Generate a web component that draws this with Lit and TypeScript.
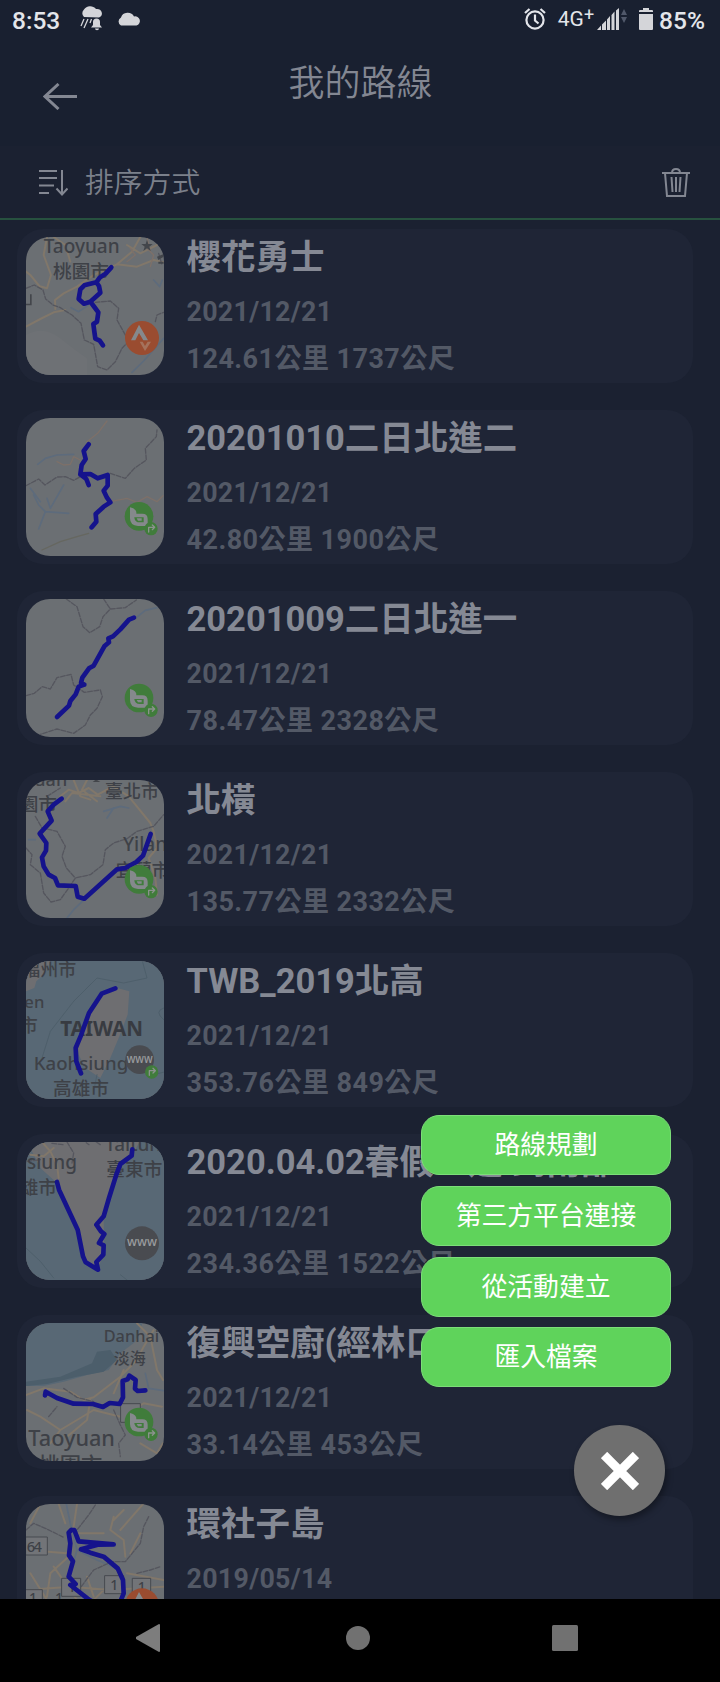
import { LitElement, html, svg, css, nothing } from 'lit';
import { customElement, property, state } from 'lit/decorators.js';

type Badge = 'strava' | 'www' | 'bryton-nav' | 'www-nav';

interface Route {
  name: string;
  date: string;
  info: string;
  badge: Badge;
  badgeX: number;
  badgeY: number;
  top: number;
  track: string;
  map: unknown;
}

// each map is drawn on a 414 unit canvas that starts at x = 47, y = top
const routes: Route[] = [
  {
    name: '櫻花勇士',
    date: '2021/12/21',
    info: '124.61公里 1737公尺',
    badge: 'strava',
    badgeX: 395,
    badgeY: 339,
    top: 36,
    track: 'M303 127 L286 146 L268 158 L258 172 L222 181 L210 193 L205 222 L221 236 L240 230 L270 203 L266 183 L258 172 M240 230 L252 246 L264 262 L260 290 L249 297 L252 320 L255 341 L268 347 L278 361',
    map: svg`
      <path class="land2" d="M47 330 Q100 300 150 340 T230 400 V450 H47Z" />
      <path class="road" d="M110 36 L100 90 L122 150 L110 190 L88 184 L60 150 L47 140 M47 305 L90 282 L130 262 L165 255 M135 252 L134 225 L160 205 L200 185 L250 150 L320 118 L380 125 L430 105 L460 112 M350 60 L390 85 L440 60 M320 118 L365 80 L390 36 M130 36 L165 60 L180 110" />
      <path class="road2" d="M360 70 L375 90 L350 110 M400 60 L430 90 L420 125 M410 36 L420 80" />
      <path class="line" d="M47 190 L72 180 L98 195 L106 222 L128 240 L150 248 L185 270 L212 295 L222 345 L250 358 L262 425 L290 435 L315 410 L335 370 L352 352 M255 232 L300 228 L325 250 L320 285 L345 330 L352 352 M435 290 L440 270 L460 262 M445 85 L455 120" />
      <path class="river" d="M182 248 L205 260 L235 240 M430 165 L448 185 L456 165 M460 340 L400 408 L365 442" />
      <path class="mark" d="M410 44 l4 13 h13 l-10 8 4 13 -11 -8 -11 8 4 -13 -10 -8 h13z M47 236 h12 v-28 h5 v33 h-17z M440 95 l20 -8 v8 l-16 10z M444 110 h16 v6 h-16z" />
      <text x="214" y="84" font-size="57" text-anchor="middle">Taoyuan</text>
      <text x="212" y="160" font-size="56" text-anchor="middle">桃園市</text>`,
  },
  {
    name: '20201010二日北進二',
    date: '2021/12/21',
    info: '42.80公里 1900公尺',
    badge: 'bryton-nav',
    badgeX: 386,
    badgeY: 334,
    top: 39,
    track: 'M235 118 L220 138 L226 162 L214 180 L210 208 L228 222 L235 240 M210 208 L240 207 L262 220 L292 210 L292 242 L280 257 L290 278 L300 292 L280 305 L256 327 L258 350 L244 367',
    map: svg`
      <path class="river" d="M82 178 L105 160 L140 150 L190 148 M70 270 L85 300 L105 320 L175 325 M105 320 L85 372 M110 280 L120 310 L160 240 M60 250 L90 290" />
      <path class="road2" d="M230 110 L262 85 L290 48 M140 170 L160 180 L180 178 L190 155 L210 165 M300 290 L350 280 L380 292 L410 275 L440 290 L458 272" />
      <path class="line" d="M47 242 L85 222 L104 240 L140 216 L165 215 L190 226 L210 215 M300 205 L345 220 L372 190 L408 165 L405 130 L438 95 L440 75" />
      <path class="road3" d="M95 435 L150 410 L200 395 L235 385" />`,
  },
  {
    name: '20201009二日北進一',
    date: '2021/12/21',
    info: '78.47公里 2328公尺',
    badge: 'bryton-nav',
    badgeX: 386,
    badgeY: 339,
    top: 42,
    track: 'M371 98 L356 104 L330 133 L308 154 L294 160 L296 172 L282 184 L250 242 L236 250 L216 278 L212 294 L222 299 L205 305 L196 328 L180 348 L176 362 L140 396',
    map: svg`
      <path class="river" d="M380 96 L405 76 L440 68" stroke-width="12" />
      <path class="line" d="M168 42 L200 65 L218 125 L238 143 L268 125 L278 95 L300 72 L345 68 L378 45 M280 42 L300 72 M47 332 L72 325 L95 305 L120 312 L140 278 L182 268 L190 300 L222 322 L270 315 L276 335 L260 370 L240 390 L225 420 L190 445 L140 432 L90 448" />`,
  },
  {
    name: '北橫',
    date: '2021/12/21',
    info: '135.77公里 2332公尺',
    badge: 'bryton-nav',
    badgeX: 386,
    badgeY: 334,
    top: 36,
    track: 'M154 92 L130 110 L112 130 L124 158 L88 197 L108 225 L107 248 L95 268 L100 295 L115 320 L134 330 L143 352 L196 354 L202 386 L222 392 L320 304 L345 300 L378 282 L398 263 L421 198',
    map: svg`
      <path class="road" d="M150 85 L175 65 L205 75 L235 60 L262 80 L300 60 M190 36 L210 85 L240 95 M230 36 L215 65 L260 100 M300 50 L355 85 L420 165 L430 190 L440 240 L415 270 L435 330 L440 380 M165 100 L185 75 L270 85" />
      <path class="river" d="M280 130 L330 115 L355 120 M290 150 L310 120 M225 392 L190 425 L170 450 M270 350 L300 320 M55 215 L75 215" />
      <path class="line" d="M47 240 L65 260 L60 290 L90 315 L100 375 L122 402 L150 395 L175 360 L195 330 L240 320 L278 290 L285 245 L310 225 L350 212 L380 190 L430 175 L460 140 M75 145 L95 180 L140 190 L165 235 L155 265 L168 300 L195 330 M110 85 L150 60" />
      <text x="72" y="54" font-size="54">uan</text>
      <path class="mark" d="M247 42 l10 -8 13 8z" />
      <text x="284" y="90" font-size="54">臺北市</text>
      <text x="28" y="128" font-size="56">園市</text>
      <text x="338" y="249" font-size="57">Yilan</text>
      <text x="316" y="326" font-size="54">宜蘭市</text>`,
  },
  {
    name: 'TWB_2019北高',
    date: '2021/12/21',
    info: '353.76公里 849公尺',
    badge: 'www-nav',
    badgeX: 388,
    badgeY: 335,
    top: 39,
    track: 'M315 121 L274 137 L236 195 L212 262 L196 300 L198 340 L212 376',
    map: svg`
      <path class="water" d="M40 30 H470 V460 H40Z" />
      <path class="land" d="M40 30 H125 L105 75 L78 100 L72 120 L47 130Z M276 135 L312 118 L357 130 L352 200 L325 270 L300 330 L270 390 L225 360 L205 320 L200 290 L240 190Z" />
      <path class="depth" d="M396 39 L410 90 L340 105 L260 90 L190 160 M190 160 L120 250 L95 330 M460 180 Q430 190 460 215 M470 370 L430 380 L370 300 M250 430 L260 380" />
      <text x="36" y="84" font-size="54">福州市</text>
      <text x="42" y="180" font-size="50">en</text>
      <text x="28" y="252" font-size="54">市</text>
      <text class="bold" x="274" y="263" font-size="62" text-anchor="middle">TAIWAN</text>
      <text x="212" y="367" font-size="56" text-anchor="middle">Kaohsiung</text>
      <text x="212" y="441" font-size="56" text-anchor="middle">高雄市</text>`,
  },
  {
    name: '2020.04.02春假一遊 到南部',
    date: '2021/12/21',
    info: '234.36公里 1522公尺',
    badge: 'www',
    badgeX: 395,
    badgeY: 346,
    top: 42,
    track: 'M366 64 L364 83 L330 108 L318 140 L296 210 L280 265 L258 290 L272 310 L282 318 L266 345 L280 352 L279 380 L258 402 L263 425 L226 403 L218 385 L202 305 L146 185 L140 162',
    map: svg`
      <path class="water" d="M40 30 H470 V470 H40Z" />
      <path class="land" d="M47 36 H390 L365 85 L330 108 L280 265 L282 375 L262 422 L225 400 L202 305 L140 165 L90 120 L60 60Z" />
      <path class="road" d="M95 42 L120 70 L140 110 L145 150 M60 80 L100 85 L130 60" />
      <path class="line" d="M170 42 L190 75 L185 105 M50 100 L90 95 M125 46 L160 50 M228 44 L236 50 M258 42 L270 50" />
      <path class="depth" d="M47 360 L90 400 L130 450 M330 440 L350 456" />
      <text x="50" y="124" font-size="57">siung</text>
      <text x="28" y="198" font-size="56">雄市</text>
      <text x="284" y="70" font-size="57">Taitung</text>
      <text x="288" y="144" font-size="56">臺東市</text>`,
  },
  {
    name: '復興空廚(經林口',
    date: '2021/12/21',
    info: '33.14公里 453公尺',
    badge: 'bryton-nav',
    badgeX: 386,
    badgeY: 336,
    top: 39,
    track: 'M104 256 L106 245 L140 264 L190 281 L248 282 L278 291 L298 279 L328 282 L338 262 L337 213 L352 208 L357 197 L376 210 L374 236 L382 243 L405 241',
    map: svg`
      <path class="water" d="M40 30 H400 L375 95 L330 130 L295 180 L230 195 L160 215 L100 228 L47 228Z" />
      <path class="depth2" d="M245 160 L260 125 L300 120 L320 150 L280 185 L200 200 L110 222 L47 228 V215 L150 200Z" />
      <path class="river" d="M405 190 L415 235 L460 242" stroke-width="10" />
      <path class="road" d="M47 255 L100 235 L180 245 L220 270 L250 262 L330 200 L380 150 L400 110 L430 60 M50 300 L90 320 L150 360 L250 300 L330 320 L400 280 L455 290 M150 360 L120 400 M380 40 L420 80 L440 180 L458 210 M240 270 L230 330 L170 380 M340 180 L310 250 M390 400 L440 430 L458 400" />
      <path class="line" d="M160 235 L200 262 L250 275 M310 300 L330 345 L345 375 L325 400 L330 440 M115 320 L140 290" />
      <path class="box" d="M332 281 h58 v56 h-58z" />
      <text x="280" y="96" font-size="49">Danhai</text>
      <text x="310" y="162" font-size="48">淡海</text>
      <text x="54" y="408" font-size="65">Taoyuan</text>
      <text x="84" y="488" font-size="64">桃園市</text>`,
  },
  {
    name: '環社子島',
    date: '2019/05/14',
    info: '',
    badge: 'strava',
    badgeX: 395,
    badgeY: 346,
    top: 42,
    track: 'M183 120 L175 128 L180 160 L176 196 L188 214 L175 260 L196 282 M180 285 L232 326 L270 350 L330 335 L340 310 L338 270 L322 235 L280 200 L240 188 L212 178 L262 164 L310 163 L205 154 L192 120 L183 120',
    map: svg`
      <path class="river" d="M168 42 L182 110 L200 180 L260 210 L320 235 M200 180 L180 250" stroke-width="12" />
      <path class="road" d="M145 42 L165 100 M200 42 L190 110 M195 130 L280 130 M180 195 L120 250 L110 320 M47 180 L170 190 M310 80 L300 120 L340 150 L345 200 M390 130 L360 190 M47 300 L180 290 L300 300 L460 290 M230 260 L250 320 M60 250 L110 330 M340 60 L310 90 M350 250 L460 270 M130 230 L200 330 M90 42 L60 100 M330 120 L400 40 M250 330 L300 280" />
      <path class="line" d="M47 120 L70 100 L105 115 L160 142 M255 45 L235 75 L200 120 M415 80 L400 110 L390 160 L345 215 L305 215 L250 240 L205 300 M380 250 L420 240 L450 230" />
      <path class="box" d="M47 141 h64 v54 h-64z M155 265 h56 v54 h-56z M284 257 h56 v54 h-56z M367 265 h54 v54 h-54z M40 299 h56 v54 h-56z" />
      <text x="49" y="185" font-size="44" textLength="46">64</text>
      <text x="172" y="307" font-size="42">1</text>
      <text x="300" y="300" font-size="42">1</text>
      <text x="382" y="307" font-size="42">1</text>
      <text x="56" y="340" font-size="42">1</text>
      <text x="134" y="340" font-size="42">1</text>`,
  },
];

@customElement('route-map')
class RouteMap extends LitElement {
  @property({ attribute: false }) route!: Route;

  static styles = css`
    :host {
      display: block;
      width: 138px;
      height: 138px;
      border-radius: 24px;
      overflow: hidden;
      background: #6b6f73;
    }

    svg {
      display: block;
      width: 138px;
      height: 138px;
    }

    path {
      fill: none;
      stroke-linejoin: round;
      stroke-linecap: round;
    }

    text {
      font-family: 'Noto Sans', 'Noto Sans CJK TC', sans-serif;
      font-weight: 500;
      fill: #3e4147;
    }

    .bold {
      font-weight: bold;
      fill: #383b41;
    }

    .water {
      fill: #586875;
    }

    .land {
      fill: #6e6e71;
    }

    .land2 {
      fill: #6e7175;
    }

    .depth {
      stroke: #4e5f6b;
      stroke-width: 3;
    }

    .depth2 {
      fill: #4c5e6b;
    }

    .road {
      stroke: #81776a;
      stroke-width: 6;
    }

    .road2 {
      stroke: #7d7069;
      stroke-width: 4;
    }

    .road3 {
      stroke: #666760;
      stroke-width: 4;
    }

    .line {
      stroke: #55565e;
      stroke-width: 4;
      stroke-dasharray: 14 5;
    }

    .river {
      stroke: #5d6b7c;
      stroke-width: 5;
    }

    .mark {
      fill: #43464b;
    }

    .box {
      fill: #727478;
      stroke: #474a50;
      stroke-width: 3;
    }

    .track {
      stroke: #15138c;
      stroke-width: 14;
    }

    .strava {
      fill: #9a4c30;
    }

    .green {
      fill: #407c3b;
    }

    .gray {
      fill: #494b50;
    }

    .logo {
      fill: #85898c;
    }

    .logo-soft {
      fill: #a5725c;
    }

    .arrow {
      stroke: #8b928d;
      stroke-width: 4;
    }

    .www {
      fill: #999b9e;
      font-size: 38px;
      text-anchor: middle;
    }
  `;

  renderBadge() {
    const { badge, badgeX, badgeY } = this.route;
    const nav = badge.endsWith('-nav');
    return svg`
      <g transform="translate(${badgeX} ${badgeY})">
        ${badge === 'strava'
          ? svg`
            <circle class="strava" r="51" />
            <path class="logo" d="M-9 -40 L18 7 H4 L-9 -15 L-20 7 H-33Z" />
            <path class="logo-soft" d="M-7 11 H2 L9 24 L17 11 H27 L9 39Z" />`
          : nothing}
        ${badge.startsWith('bryton')
          ? svg`
            <circle class="green" r="43" />
            <path class="logo" fill-rule="evenodd" d="M-27 -27 Q-6 -22 -8 -8 H10 Q26 -8 26 8 V29 H-3 Q-27 28 -27 6Z M-14 4 Q-12 18 2 18 H14 V3 H-14Z" />
            <path class="logo" d="M-7 6 h15 v7 h-11z" />`
          : nothing}
        ${badge.startsWith('www')
          ? svg`
            <circle class="gray" r="${nav ? 43 : 51}" />
            <text class="www" y="9" textLength="${nav ? 78 : 90}" lengthAdjust="spacingAndGlyphs">www</text>`
          : nothing}
        ${nav
          ? svg`
            <circle class="green" cx="36" cy="37" r="20" />
            <path class="arrow" d="M29 47 V33 H46 M40 26 L47 33 L40 40" />`
          : nothing}
      </g>`;
  }

  render() {
    return html`
      <svg viewBox="47 ${this.route.top} 414 414">
        ${this.route.map}
        <path class="track" d=${this.route.track} />
        ${this.renderBadge()}
      </svg>
    `;
  }
}

@customElement('route-card')
class RouteCard extends LitElement {
  @property({ attribute: false }) route!: Route;

  static styles = css`
    :host {
      display: flex;
      gap: 22.5px;
      flex: none;
      box-sizing: border-box;
      height: 154px;
      padding: 8px 9px;
      border-radius: 26px;
      background: #1f2536;
    }

    .text {
      margin-top: -8px;
      font-weight: bold;
      white-space: nowrap;
      color: #535966;
    }

    .name {
      font-size: 34.5px;
      line-height: 56px;
      color: #858994;
    }

    .date {
      font-size: 26.8px;
      line-height: 54px;
      letter-spacing: 0.3px;
    }

    .info {
      font-size: 27px;
      line-height: 41px;
      letter-spacing: 0.45px;
    }
  `;

  render() {
    return html`
      <route-map .route=${this.route}></route-map>
      <div class="text">
        <div class="name">${this.route.name}</div>
        <div class="date">${this.route.date}</div>
        <div class="info">${this.route.info}</div>
      </div>
    `;
  }
}

@customElement('status-bar')
class StatusBar extends LitElement {
  static styles = css`
    :host {
      display: flex;
      align-items: center;
      box-sizing: border-box;
      height: 40px;
      padding: 0 15px 2px 12px;
      color: #e3e5ea;
      font-size: 24.5px;
      line-height: 38px;
      font-weight: 500;
    }

    svg {
      display: block;
      fill: #d4d5d9;
      overflow: visible;
    }

    span {
      margin-top: 3px;
    }

    .rain {
      margin-left: 19px;
    }

    .cloud {
      margin-left: 13px;
    }

    .alarm {
      margin-left: auto;
    }

    .net {
      margin: 0 0 0 12px;
      font-size: 21px;
      font-weight: 400;
    }

    .net sup {
      font-size: 18px;
      line-height: 0;
      vertical-align: 5px;
    }

    .signal {
      margin-left: 3px;
    }

    .battery {
      margin-left: 11px;
      margin-right: 6px;
    }
  `;

  render() {
    return html`
      <span>8:53</span>
      <svg class="rain" width="25" height="26" viewBox="0 0 25 26">
        <path d="M5 11 A5 5 0 0 1 5 3.5 A7 6 0 0 1 17 3 A5 4.500 0 0 1 20 11.500Z" />
        <path d="M5 13 L2 20 M9 13 L5 22 M12.500 13 L11 17" stroke="#d4d5d9" stroke-width="1.300" />
        <path d="M12 21.500 L14 19 V16 A3.500 3.500 0 0 1 21 16 V19 L23 21.500Z M16 22.500 h4 a2 1.700 0 0 1 -4 0z" />
      </svg>
      <svg class="cloud" width="24" height="14" viewBox="0 0 24 14">
        <path d="M4 13.500 A4.500 4.500 0 0 1 4 5.500 A7 6.500 0 0 1 17 4.500 A4.500 4.500 0 0 1 19.500 13.500Z" />
      </svg>
      <svg class="alarm" width="22" height="22" viewBox="0 0 22 22">
        <g fill="none" stroke="#e3e5ea" stroke-width="2.200">
          <circle cx="11" cy="12" r="8.600" />
          <path d="M11 6.500 V12.500 L14.500 15.500 M1 5 L5.500 1 M21 5 L16.500 1" />
        </g>
      </svg>
      <span class="net">4G<sup>+</sup></span>
      <svg class="signal" width="31" height="22" viewBox="0 0 31 22">
        <path d="M0 22 L4 17.500 V22Z M5 16.500 L9 12.500 V22 H5Z M10 11.500 L13 8 V22 H10Z M14.500 7 L17.500 3.500 V22 H14.500Z M19 2.500 L22 0 V22 H19Z" />
        <path fill="#51586a" d="M24 7 L27 1 L30 7Z M24 9 H30 L27 15Z" />
      </svg>
      <svg class="battery" width="14" height="22" viewBox="0 0 14 22">
        <path d="M4 0 H10 V2 H13 Q14 2 14 3 V4 H0 V3 Q0 2 1 2 H4Z M0 6 H14 V21 Q14 22 13 22 H1 Q0 22 0 21Z" />
      </svg>
      <span>85%</span>
    `;
  }
}

@customElement('app-root')
class AppRoot extends LitElement {
  @state() actions = ['路線規劃', '第三方平台連接', '從活動建立', '匯入檔案'];

  static styles = css`
    :host {
      display: flex;
      flex-direction: column;
      position: relative;
      width: 720px;
      height: 1682px;
      overflow: hidden;
      background: #192030;
      font-family: Roboto, 'Noto Sans CJK TC', sans-serif;
    }

    svg {
      display: block;
      fill: none;
    }

    .header {
      display: grid;
      grid-template-columns: 1fr auto 1fr;
      height: 106px;
      color: #838792;
    }

    .back {
      margin: 43px 0 0 43px;
    }

    .title {
      font-size: 36px;
      line-height: 89px;
      font-weight: 350;
      padding-left: 1px;
    }

    .sort {
      display: flex;
      align-items: center;
      box-sizing: border-box;
      height: 74px;
      padding: 0 30px 0 39px;
      border-bottom: 2px solid #27513f;
      background: #1b2131;
      color: #7b808b;
      font-size: 28.8px;
      font-weight: 350;
    }

    .sort span {
      flex: 1;
      margin: -4px 0 0 17px;
    }

    .list {
      flex: 1;
      display: flex;
      flex-direction: column;
      gap: 27px;
      min-height: 0;
      overflow: hidden;
      padding: 9px 27px 0 17px;
      background: #1b2131;
    }

    .nav {
      display: grid;
      grid-template-columns: repeat(3, 26px);
      justify-content: center;
      align-items: center;
      gap: 182px;
      height: 83px;
      padding-right: 6px;
      box-sizing: border-box;
      background: #000;
    }

    .nav svg {
      margin-top: -5px;
    }

    .menu {
      position: absolute;
      left: 421px;
      top: 1115px;
      width: 250px;
      display: flex;
      flex-direction: column;
      gap: 10.8px;
    }

    .action {
      box-sizing: border-box;
      height: 60px;
      border: 1px solid #7cde79;
      border-radius: 18px;
      background: #5fd35b;
      color: #fff;
      font-size: 25.8px;
      line-height: 58px;
      text-align: center;
    }

    .close {
      position: absolute;
      left: 574px;
      top: 1425px;
      display: grid;
      place-items: center;
      width: 91px;
      height: 91px;
      border-radius: 50%;
      background: #6f6f6f;
      box-shadow: 2px 4px 6px rgba(0, 0, 0, 0.35);
    }
  `;

  render() {
    return html`
      <status-bar></status-bar>
      <div class="header">
        <svg class="back" width="34" height="27" viewBox="0 0 34 27" stroke="#838792" stroke-width="3">
          <path d="M34 13.500 H2 M15.500 1 L2 13.500 L15.500 26" />
        </svg>
        <div class="title">我的路線</div>
      </div>
      <div class="sort">
        <svg width="29" height="27" viewBox="0 0 29 27" stroke="#838792" stroke-width="2">
          <path d="M0 2 H18 M0 9 H18 M0 16.500 H15 M0 24 H10 M23 1 V25.500 M17.500 19.500 L23 25.500 L28.500 19.500" />
        </svg>
        <span>排序方式</span>
        <svg width="28" height="29" viewBox="0 0 28 29" stroke="#838792" stroke-width="2">
          <path d="M0 5 H28 M10 5 Q10 1 14 1 Q18 1 18 5 M3 5 L5 28 H23 L25 5 M9.500 9 L10.500 24 M14 9 V24 M18.500 9 L17.500 24" />
        </svg>
      </div>
      <div class="list">
        ${routes.map((route) => html`<route-card .route=${route}></route-card>`)}
      </div>
      <div class="nav">
        <svg width="26" height="28" viewBox="0 0 26 28">
          <path fill="#7d7d7d" d="M23 0 Q24 0 24 1 V27 Q24 28 23 28 L0 15 Q-1 14 0 13Z" />
        </svg>
        <svg width="26" height="26" viewBox="0 0 26 26">
          <circle cx="14" cy="13" r="12" fill="#717171" />
        </svg>
        <svg width="26" height="26" viewBox="0 0 26 26">
          <rect width="26" height="26" rx="1.500" fill="#717171" />
        </svg>
      </div>
      <div class="menu">
        ${this.actions.map((action) => html`<div class="action">${action}</div>`)}
      </div>
      <div class="close">
        <svg width="38" height="38" viewBox="0 0 38 38" stroke="#fff" stroke-width="9">
          <path d="M3 3 L35 35 M35 3 L3 35" />
        </svg>
      </div>
    `;
  }
}
